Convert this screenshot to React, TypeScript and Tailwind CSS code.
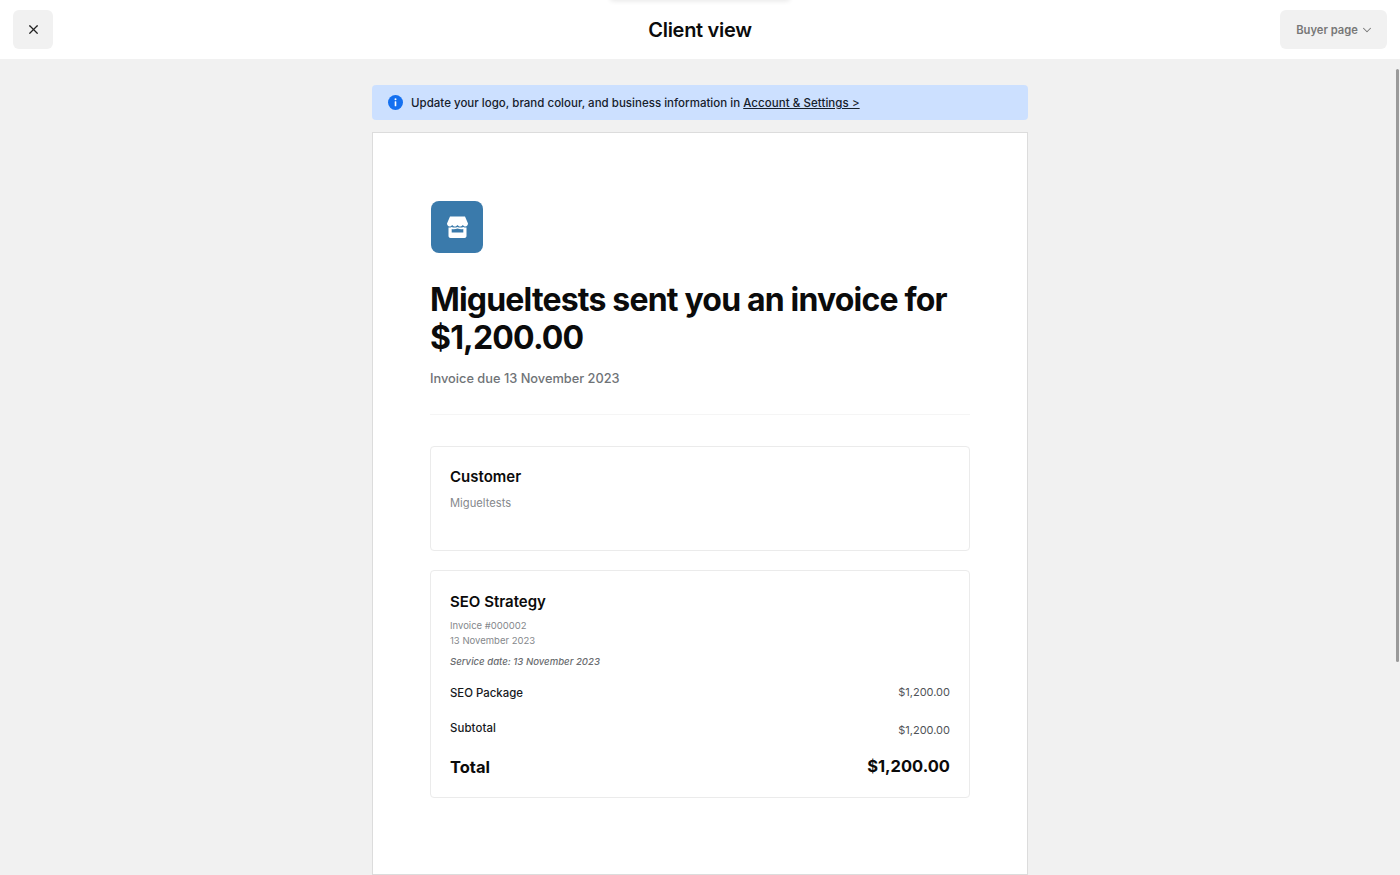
import { X, ChevronDown } from 'lucide-react';

function StoreIcon() {
  return (
    <svg width="21" height="22" viewBox="0 0 21 22" fill="none">
      <path
        d="M3 .500h15L21 7.600c0 1.500-1.100 2.900-2.600 2.900-1.100 0-2.100-.6-2.600-1.500-.5.9-1.500 1.500-2.700 1.500-1.100 0-2-.6-2.600-1.500-.6.9-1.500 1.500-2.600 1.500-1.200 0-2.200-.6-2.700-1.500-.5.9-1.500 1.500-2.600 1.500C1.100 10.500 0 9.100 0 7.600z"
        fill="#fff"
      />
      <path
        d="M1.500 11.500c1.200.2 2.300-.1 3.200-.6 1.600.9 3.900.9 5.800 0 1.900.9 4.200.9 5.800 0 .9.5 2 .8 3.200.6V20c0 1.100-.9 2-2 2h-14c-1.100 0-2-.9-2-2z"
        fill="#fff"
      />
      <path d="M4.700 13c1.800.5 3.900.3 5.800-.4 1.900.7 4 .9 5.800.4v3.500H4.700z" fill="#3a7aab" />
    </svg>
  );
}

function InfoIcon() {
  return (
    <svg width="15" height="15" viewBox="0 0 15 15">
      <circle cx="7.500" cy="7.500" r="7.500" fill="#1470f0" />
      <rect x="6.700" y="6.300" width="1.600" height="5" rx="0.500" fill="#fff" />
      <circle cx="7.500" cy="4.300" r="1" fill="#fff" />
    </svg>
  );
}

export default function App() {
  return (
    <div className="relative flex h-[875px] flex-col overflow-hidden bg-[#f1f1f1] font-['Inter',sans-serif]">
      {/* top bar */}
      <header className="relative grid h-[59px] shrink-0 grid-cols-3 items-center bg-white px-[13px]">
        <div className="absolute left-[610px] top-[-6px] h-[6px] w-[180px] rounded-full shadow-[0_1px_5px_rgba(0,0,0,0.1)]" />
        <button className="flex h-[39px] w-[40px] items-center justify-center rounded-[6px] bg-[#f1f1f1] text-[#222]">
          <X size={15} strokeWidth={1.9} />
        </button>
        <h1 className="text-center text-[20px] font-semibold leading-none tracking-[-0.3px] text-[#0b0b0b]">Client view</h1>
        <button className="ml-auto flex h-[39px] w-[107px] items-center justify-center gap-[2px] rounded-[6px] bg-[#f1f1f1] pl-[3px] pt-px text-[11.2px] font-semibold text-[#777]">
          Buyer page
          <ChevronDown size={14} strokeWidth={1.8} />
        </button>
      </header>

      <main className="flex min-h-0 flex-1 flex-col items-center pt-[26px]">
        <div className="flex h-[35px] w-[656px] shrink-0 items-center gap-[8px] rounded-[4px] bg-[#cce0ff] pl-[16px] text-[11.5px] font-medium tracking-[0.015px] text-[#16202c]">
          <InfoIcon />
          <span className="pt-[2px]">
            Update your logo, brand colour, and business information in{' '}
            <span className="tracking-[0.06px] underline">Account &amp; Settings &gt;</span>
          </span>
        </div>

        <section className="mt-[12px] h-[743px] w-[656px] shrink-0 border border-[#dcdcdc] bg-white px-[57px] pt-[68px]">
          <div className="ml-px flex h-[52px] w-[52px] items-center justify-center rounded-[8px] bg-[#3a7aab]">
            <StoreIcon />
          </div>

          <h2 className="mt-[28px] text-[32px] font-bold leading-[38px] tracking-[-0.82px] text-[#0b0b0b]">
            Migueltests sent you an invoice for
            <br />
            $1,200.00
          </h2>
          <p className="mt-[13px] text-[12.8px] font-medium leading-[18px] text-[#6f7377]">Invoice due 13 November 2023</p>
          <div className="mt-[26px] h-px bg-[#f5f5f5]" />

          <div className="mt-[31px] h-[105px] rounded-[4px] border border-[#ebebeb] px-[19px] pt-[21px]">
            <h3 className="text-[15px] font-semibold leading-[18px] text-[#0b0b0b]">Customer</h3>
            <p className="mt-[9px] text-[11.2px] leading-[16px] text-[#85888c]">Migueltests</p>
          </div>

          <div className="mt-[19px] h-[228px] rounded-[4px] border border-[#ebebeb] px-[19px] pt-[22px]">
            <h3 className="text-[15px] font-semibold leading-[18px] text-[#0b0b0b]">SEO Strategy</h3>
            <p className="mt-[7px] text-[9.5px] leading-[15px] text-[#85888c]">
              Invoice #000002
              <br />
              13 November 2023
            </p>
            <p className="mt-[7px] text-[9.6px] font-medium italic leading-[14px] text-[#6a6d70]">
              Service date: 13 November 2023
            </p>

            <div className="mt-[16px] flex justify-between text-[11px] leading-[14px]">
              <span className="mt-px text-[11.4px] font-medium text-[#16191c]">SEO Package</span>
              <span className="text-[#4f5357]">$1,200.00</span>
            </div>
            <div className="mt-[21px] flex justify-between text-[11px] leading-[14px]">
              <span className="text-[11.4px] font-medium tracking-[0.1px] text-[#16191c]">Subtotal</span>
              <span className="mt-[2px] text-[#4f5357]">$1,200.00</span>
            </div>
            <div className="mt-[19px] flex justify-between text-[16.500px] font-bold leading-[20px] text-[#0b0b0b]">
              <span className="mt-px">Total</span>
              <span>$1,200.00</span>
            </div>
          </div>
        </section>
      </main>

      {/* overlay scrollbar */}
      <div className="absolute left-[1396px] top-[69px] h-[593px] w-[3px] rounded-full bg-[#9a9a9a]" />
    </div>
  );
}
